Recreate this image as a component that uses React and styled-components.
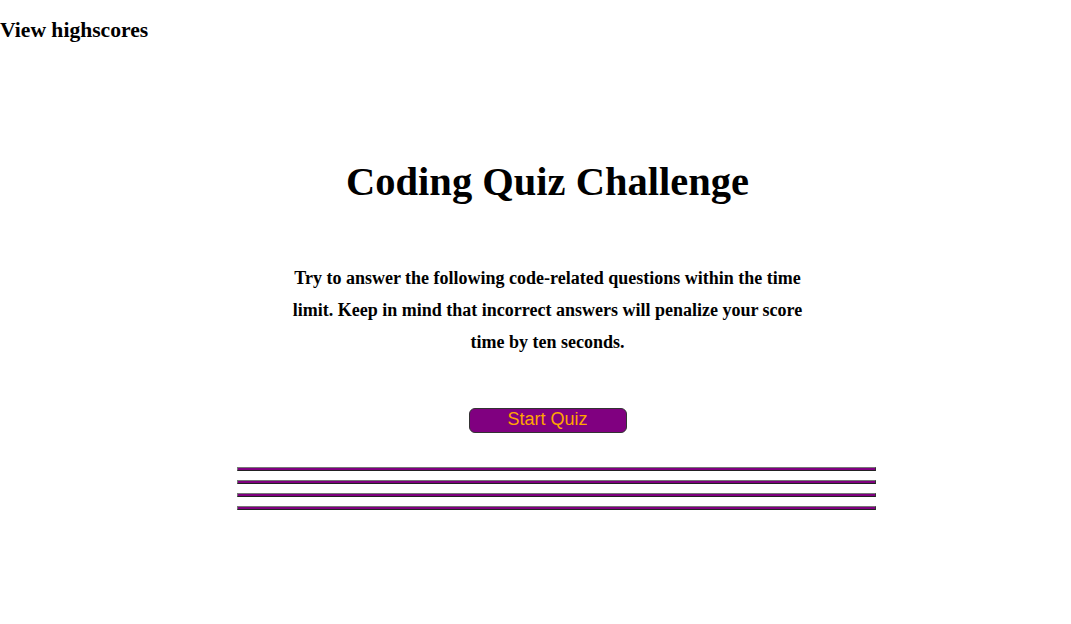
import React from "react";
import styled, { createGlobalStyle } from "styled-components";

const GlobalStyle = createGlobalStyle`
  body {
    margin: 0;
    font-family: "Liberation Serif", "Times New Roman", serif;
    background: #ffffff;
    color: #000000;
  }
`;

const Header = styled.header`
  padding-top: 18px;
  font-weight: bold;
  font-size: 21.6px;
  line-height: 24px;
`;

const Main = styled.main`
  padding-left: 24px;
  display: flex;
  flex-direction: column;
  align-items: center;
`;

const Title = styled.h1`
  margin: 116px 0 0;
  font-size: 40.5px;
  line-height: 48px;
  font-weight: bold;
`;

const Intro = styled.p`
  margin: 56px 0 0;
  width: 520px;
  text-align: center;
  font-weight: bold;
  font-size: 18px;
  line-height: 32px;
`;

const StartBtn = styled.button`
  margin-top: 50px;
  width: 158px;
  height: 25px;
  padding: 0 0 2px;
  border: 1px solid #333;
  border-radius: 6px;
  background-color: #800080;
  color: orange;
  font-family: "Liberation Sans", Arial, sans-serif;
  font-size: 18px;
`;

const Choices = styled.div`
  align-self: flex-start;
  margin: 34px 0 0 213px;
  display: flex;
  flex-direction: column;
  gap: 9px;
`;

const Choice = styled.button`
  display: block;
  width: 639px;
  height: 4px;
  padding: 0;
  border: 1px solid;
  border-color: #777 #333 #222 #777;
  background-color: #800080;
`;

const App = () => {
  const choices = [1, 2, 3, 4];
  return (
    <>
      <GlobalStyle />
      <Header>View highscores</Header>
      <Main>
        <Title>Coding Quiz Challenge</Title>
        <Intro>
          Try to answer the following code-related questions within the time
          limit. Keep in mind that incorrect answers will penalize your score
          time by ten seconds.
        </Intro>
        <StartBtn>Start Quiz</StartBtn>
        <Choices>
          {choices.map((c) => (
            <Choice key={c} />
          ))}
        </Choices>
      </Main>
    </>
  );
};

export default App;
